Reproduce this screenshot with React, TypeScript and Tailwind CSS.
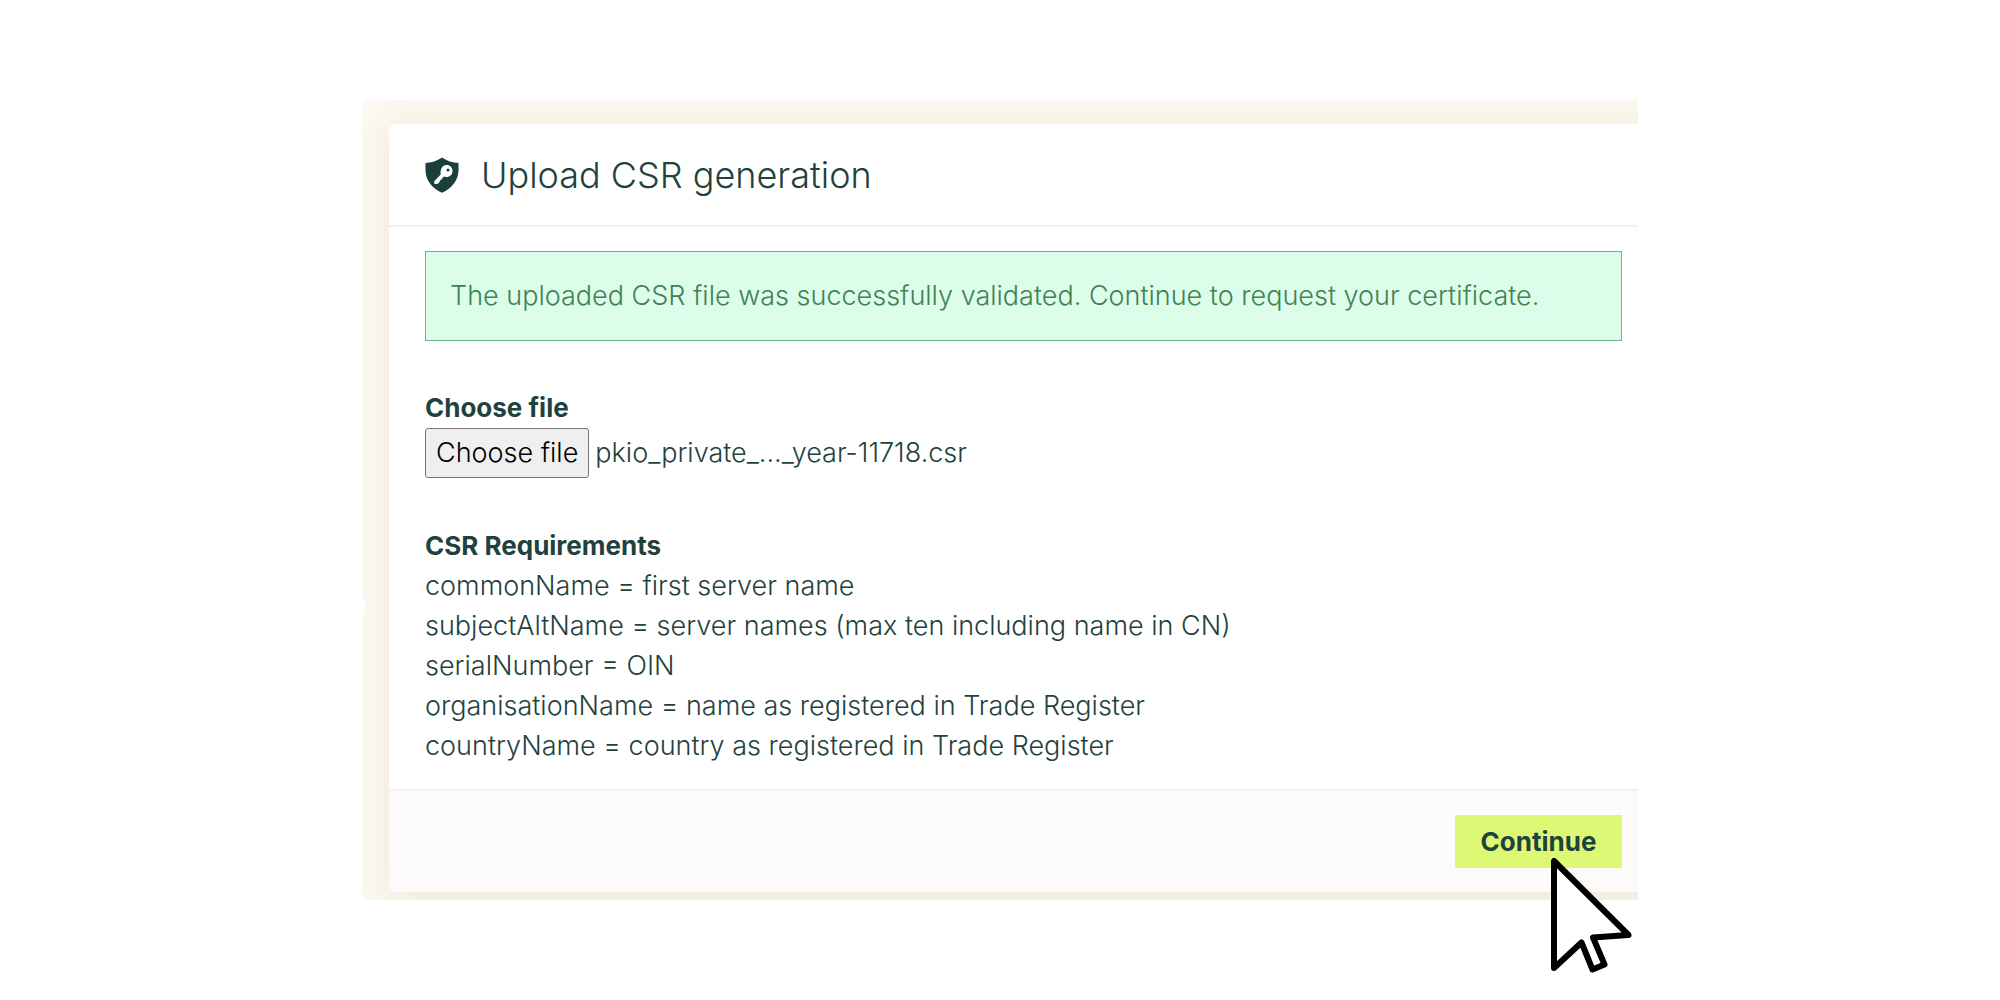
import React, { useRef, useState } from 'react';

const requirements = [
  'commonName = first server name',
  'subjectAltName = server names (max ten including name in CN)',
  'serialNumber = OIN',
  'organisationName = name as registered in Trade Register',
  'countryName = country as registered in Trade Register',
];

function ShieldKeyIcon() {
  return (
    <svg viewBox="0 0 34 36" className="h-9 w-[34px] shrink-0" aria-hidden="true">
      <path
        d="M17 0.5C22 4 27.500 5.500 33.500 6V13C33.500 23 27 31.500 17 35.700C7 31.500 0.500 23 0.500 13V6C6.500 5.500 12 4 17 0.500Z"
        fill="#1b3f3b"
      />
      <path
        d="M21.500 8C25 8 27.500 10.500 27.500 14C27.500 17.500 25 20 21.500 20C20.500 20 19.700 19.800 19 19.500L17.500 21L16.500 22.500L15 23.500L14.300 25.500L12 27H9.500L9 24.500L15.700 17.500C15 12 17.500 8 21.500 8Z"
        fill="#fff"
      />
      <circle cx="23" cy="13" r="1.500" fill="#1b3f3b" />
    </svg>
  );
}

function Pointer() {
  return (
    <svg
      viewBox="0 0 82 116"
      className="pointer-events-none absolute left-24 top-11 z-10 h-[116px] w-[82px]"
      aria-hidden="true"
    >
      <path
        d="M4 3V110L31.500 84.500L42.500 111.500L54.500 106.500L43 79.500L78.500 77Z"
        fill="#fff"
        stroke="#000"
        strokeWidth="6"
        strokeLinejoin="round"
      />
    </svg>
  );
}

export default function App() {
  const inputRef = useRef<HTMLInputElement>(null);
  const [fileName, setFileName] = useState('pkio_private_..._year-11718.csr');

  const handleChange = (e: React.ChangeEvent<HTMLInputElement>) => {
    const file = e.target.files?.[0];
    if (file) setFileName(file.name);
  };

  return (
    <main className="min-h-screen bg-white py-[100px] font-[Inter,sans-serif] text-[27px] font-[350] leading-10 text-[#1f423e]">
      <div className="relative mx-auto w-full max-w-[1276px]">
        <div className="relative overflow-hidden bg-[#fcf9f2] pb-2 pl-[27px] pt-6">
          <span className="absolute -left-[37px] top-[485px] size-10 rounded-full bg-white" />
          <section className="-mr-6 rounded-md bg-white pr-6 shadow-[0_4px_36px_#efe4d3]">
            <header className="-mr-6 flex items-center gap-[22px] border-b-2 border-[#f5efea] px-9 pb-[26px] pt-[27px]">
              <ShieldKeyIcon />
              <h1 className="text-[36px] font-[350] leading-[48px]">Upload CSR generation</h1>
            </header>

            <div className="pb-[23px] pl-9 pr-4 pt-6">
              <p role="status" className="border border-[#6fb48f] bg-[#dcfdea] px-6 py-6 text-[#3f8352]">
                The uploaded CSR file was successfully validated. Continue to request your certificate.
              </p>

              <div className="mt-[47px]">
                <label htmlFor="csr-file" className="block text-[26px] font-bold">Choose file</label>
                <div className="flex items-center gap-1.5">
                  <input ref={inputRef} id="csr-file" type="file" accept=".csr" onChange={handleChange} className="sr-only" />
                  <button
                    type="button"
                    onClick={() => inputRef.current?.click()}
                    className="h-[50px] rounded-[3px] border border-[#767676] bg-[#efefef] px-2.5 text-black"
                  >
                    Choose file
                  </button>
                  <span>{fileName}</span>
                </div>
              </div>

              <h2 className="mt-12 text-[26px] font-bold">CSR Requirements</h2>
              <ul>
                {requirements.map((line) => (
                  <li key={line}>{line}</li>
                ))}
              </ul>
            </div>

            <footer className="-mr-6 flex justify-end rounded-b-md border-t-2 border-[#f4efe7] bg-[#fcfbf9] py-6 pr-10">
              <button type="button" className="h-[53px] min-w-[167px] bg-[#ddf874] px-6 text-[26px] font-bold">
                Continue
              </button>
            </footer>
          </section>
        </div>
        <div className="pointer-events-none absolute bottom-[33px] right-4 h-[53px] w-[168px]">
          <Pointer />
        </div>
      </div>
    </main>
  );
}
